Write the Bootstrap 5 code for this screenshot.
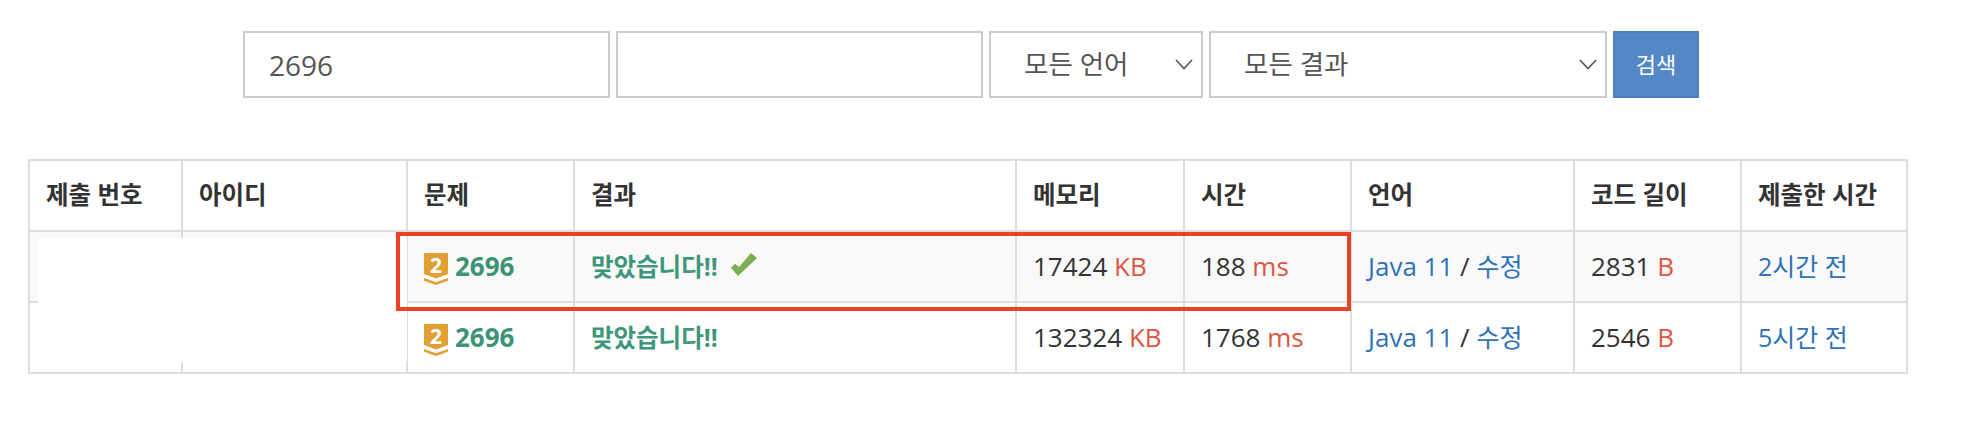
<!DOCTYPE html>
<html lang="ko">

<head>
    <meta charset="UTF-8">
    <meta name="viewport" content="width=device-width, initial-scale=1.0">
    <title>채점 현황</title>
    <link href="https://cdn.jsdelivr.net/npm/bootstrap@5.3.1/dist/css/bootstrap.min.css" rel="stylesheet">
    <style>
        body {
            font-family: "Open Sans", "Noto Sans CJK KR", sans-serif;
            color: #333;
            background: #fff;
        }

        .page-wrap {
            position: relative;
            width: 1878px;
            margin-left: 28px;
            padding-top: 31px;
        }

        .status-form {
            padding-left: 215px;
            height: 67px;
            gap: 6px;
        }

        .status-form .form-control,
        .status-form .form-select {
            height: 67px;
            border: 2px solid #ccc;
            border-radius: 0;
            color: #555;
            box-shadow: none;
        }

        .status-form .form-control {
            width: 367px;
            flex: none;
            font-size: 28px;
            padding: 0 24px;
        }

        .status-form .form-select {
            flex: none;
            font-size: 26.5px;
            padding: 0 24px 0 33px;
            background-image: url("data:image/svg+xml,%3csvg xmlns='http://www.w3.org/2000/svg' viewBox='0 0 18 11'%3e%3cpath fill='none' stroke='%23555' stroke-width='1.6' d='M1 1l8 8.5L17 1'/%3e%3c/svg%3e");
            background-position: right 8px center;
            background-size: 18px 11px;
        }

        .select-lang { width: 214px; }
        .select-result { width: 398px; }

        .btn-search {
            width: 86px;
            height: 67px;
            padding: 0;
            font-size: 22px;
            color: #fff;
            background: #5487c5;
            border: 2px solid #4a7fc0;
            border-radius: 0;
        }

        .status-table {
            width: 1878px;
            margin: 61px 0 0;
            table-layout: fixed;
            border-collapse: collapse;
            font-size: 26px;
            --bs-table-color: #333;
            --bs-table-bg: #fff;
        }

        .status-table th,
        .status-table td {
            border: 2px solid #ddd;
            padding: 0 16px;
            vertical-align: middle;
            white-space: nowrap;
        }

        .status-table th { height: 71px; font-size: 24.5px; font-weight: 700; }
        .status-table td { height: 71px; }
        .status-table .row-first td { background: #f9f9f9; }

        .status-table a { color: #2f72b8; text-decoration: none; }
        .status-table a.link-ko { font-size: 25px; }
        .unit { color: #de5543; }
        .status-table a.problem-link { color: #3c9474; font-weight: 700; }
        .result-ac { color: #3f9779; font-size: 24.5px; font-weight: 700; }

        .tier-icon { width: 24px; height: 32px; margin-right: 7px; vertical-align: -9px; overflow: visible; }
        .check-icon { width: 26px; height: 23px; margin-left: 13px; vertical-align: 0; }

        .id-mask { position: absolute; background: #fff; }
        .id-mask-a { left: 10px; top: 238px; width: 369px; height: 65px; }
        .id-mask-b { left: 2px; top: 303px; width: 377px; height: 59px; }

        .highlight-box {
            position: absolute;
            left: 368px;
            top: 232px;
            width: 955px;
            height: 79px;
            border: 4px solid #e84126;
            pointer-events: none;
        }
    </style>
</head>

<body>
    <div class="page-wrap">
        <form class="status-form d-flex">
            <input type="text" class="form-control" value="2696">
            <input type="text" class="form-control">
            <select class="form-select select-lang">
                <option>모든 언어</option>
            </select>
            <select class="form-select select-result">
                <option>모든 결과</option>
            </select>
            <button type="button" class="btn btn-primary btn-search">검색</button>
        </form>

        <table class="table status-table">
            <colgroup>
                <col style="width:153px">
                <col style="width:225px">
                <col style="width:167px">
                <col style="width:442px">
                <col style="width:168px">
                <col style="width:167px">
                <col style="width:223px">
                <col style="width:167px">
                <col style="width:166px">
            </colgroup>
            <thead>
                <tr>
                    <th>제출 번호</th>
                    <th>아이디</th>
                    <th>문제</th>
                    <th>결과</th>
                    <th>메모리</th>
                    <th>시간</th>
                    <th>언어</th>
                    <th>코드 길이</th>
                    <th>제출한 시간</th>
                </tr>
            </thead>
            <tbody>
                <tr class="row-first">
                    <td></td>
                    <td></td>
                    <td>
                        <svg class="tier-icon" viewBox="0 0 24 32"><path fill="#e2a034" d="M0 0h24v21l-12 4.500-12-4.500z"/><path fill="#e2a034" d="M0 25l12 4.200 12-4.200v2.800l-12 4.200-12-4.200z"/><text x="12" y="20" text-anchor="middle" font-family="Open Sans" font-weight="700" font-size="21" fill="#fff">2</text></svg><a class="problem-link" href="#">2696</a>
                    </td>
                    <td><span class="result-ac">맞았습니다!!</span><svg class="check-icon" viewBox="0 0 26 23"><path fill="#7eae52" d="M0 14.700L4 10.700 8 14 20 0l6 5L7 23z"/></svg></td>
                    <td>17424 <span class="unit">KB</span></td>
                    <td>188 <span class="unit">ms</span></td>
                    <td><a href="#">Java 11</a> / <a class="link-ko" href="#">수정</a></td>
                    <td>2831 <span class="unit">B</span></td>
                    <td><a class="link-ko" href="#">2시간 전</a></td>
                </tr>
                <tr>
                    <td></td>
                    <td></td>
                    <td>
                        <svg class="tier-icon" viewBox="0 0 24 32"><path fill="#e2a034" d="M0 0h24v21l-12 4.500-12-4.500z"/><path fill="#e2a034" d="M0 25l12 4.200 12-4.200v2.800l-12 4.200-12-4.200z"/><text x="12" y="20" text-anchor="middle" font-family="Open Sans" font-weight="700" font-size="21" fill="#fff">2</text></svg><a class="problem-link" href="#">2696</a>
                    </td>
                    <td><span class="result-ac">맞았습니다!!</span></td>
                    <td>132324 <span class="unit">KB</span></td>
                    <td>1768 <span class="unit">ms</span></td>
                    <td><a href="#">Java 11</a> / <a class="link-ko" href="#">수정</a></td>
                    <td>2546 <span class="unit">B</span></td>
                    <td><a class="link-ko" href="#">5시간 전</a></td>
                </tr>
            </tbody>
        </table>

        <div class="id-mask id-mask-a"></div>
        <div class="id-mask id-mask-b"></div>
        <div class="highlight-box"></div>
    </div>

    <script src="https://cdn.jsdelivr.net/npm/bootstrap@5.3.1/dist/js/bootstrap.bundle.min.js"></script>
</body>

</html>
